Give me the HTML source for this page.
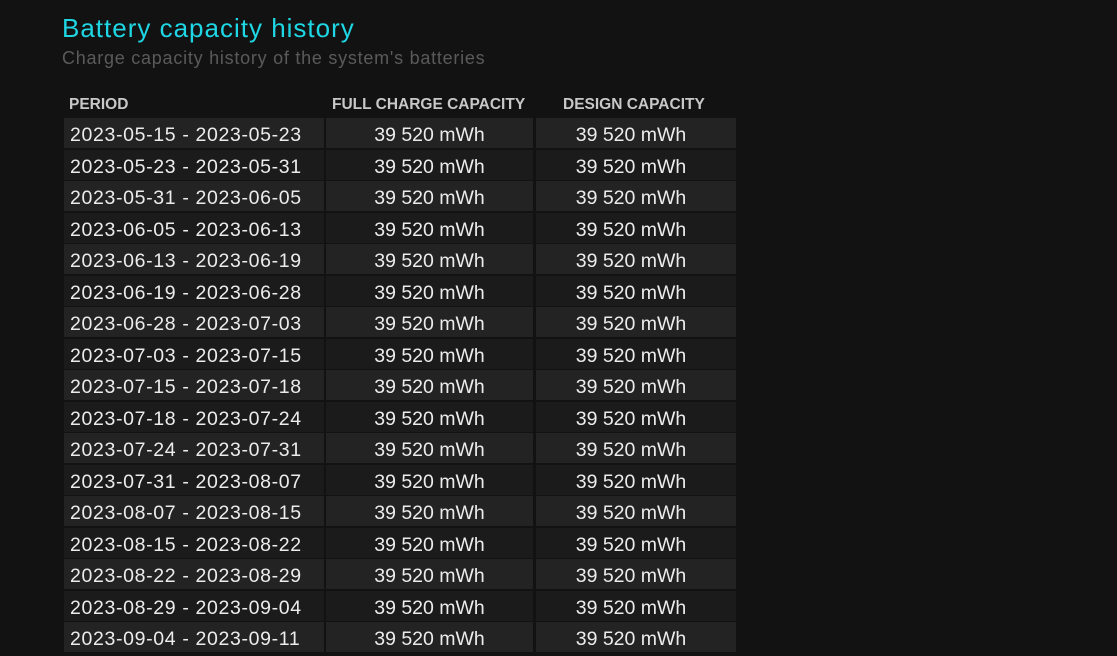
<!DOCTYPE html>
<html><head><meta charset="utf-8"><style>
html,body{margin:0;padding:0;background:#121212;width:1117px;height:628px;overflow:hidden;font-family:"Liberation Sans",sans-serif;}
h1{position:absolute;left:62px;top:13px;margin:0;font-size:26px;font-weight:normal;color:#1fd6e4;letter-spacing:1px}
.sub{position:absolute;left:62px;top:48px;font-size:18px;color:#5a5a5a;letter-spacing:0.75px}
.hd{position:absolute;top:96px;font-size:15.5px;font-weight:bold;color:#c8c8c8}
.row{position:absolute;left:64px;height:30px}
.c{position:absolute;top:0;height:30px;line-height:34px;font-size:19.5px;color:#ececec}
.c1{left:0;width:260px;padding-left:6px;box-sizing:border-box;letter-spacing:0.65px}
.c2{left:262px;width:207px;text-align:center}
.c3{left:472px;width:200px;text-align:center;box-sizing:border-box;padding-right:10px}
.a .c{background:#232323}.b .c{background:#1b1b1b}
</style></head><body>
<h1>Battery capacity history</h1>
<div class="sub">Charge capacity history of the system's batteries</div>
<div class="hd" style="left:69px">PERIOD</div>
<div class="hd" style="left:332px">FULL CHARGE CAPACITY</div>
<div class="hd" style="left:563px">DESIGN CAPACITY</div>
<div id="t"></div>
<script>
var p=["2023-05-15 - 2023-05-23","2023-05-23 - 2023-05-31","2023-05-31 - 2023-06-05","2023-06-05 - 2023-06-13","2023-06-13 - 2023-06-19","2023-06-19 - 2023-06-28","2023-06-28 - 2023-07-03","2023-07-03 - 2023-07-15","2023-07-15 - 2023-07-18","2023-07-18 - 2023-07-24","2023-07-24 - 2023-07-31","2023-07-31 - 2023-08-07","2023-08-07 - 2023-08-15","2023-08-15 - 2023-08-22","2023-08-22 - 2023-08-29","2023-08-29 - 2023-09-04","2023-09-04 - 2023-09-11"];
var h="";for(var i=0;i<p.length;i++){h+='<div class="row '+(i%2?'b':'a')+'" style="top:'+(118+i*31.53)+'px"><div class="c c1">'+p[i]+'</div><div class="c c2">39 520 mWh</div><div class="c c3">39 520 mWh</div></div>';}
document.getElementById("t").innerHTML=h;
</script>
</body></html>
